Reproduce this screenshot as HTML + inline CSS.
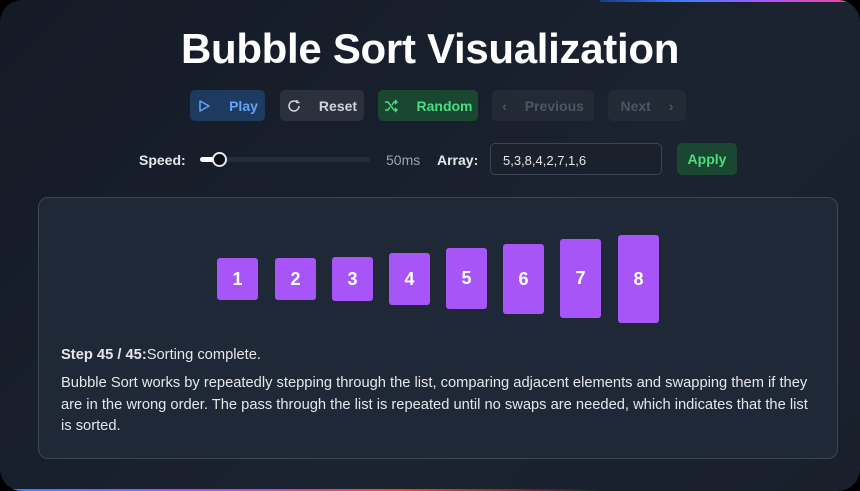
<!DOCTYPE html>
<html><head><meta charset="utf-8"><style>
*{box-sizing:border-box;margin:0;padding:0}
body{width:860px;height:491px;background:#000;font-family:"Liberation Sans",sans-serif;position:relative;overflow:hidden}
.card{position:absolute;left:0;top:0;width:860px;height:491px;border-radius:22px;background:linear-gradient(135deg,#141a26,#1b2230 60%,#19202c);overflow:hidden}
.topline{position:absolute;top:0;left:600px;right:10px;height:2px;background:linear-gradient(90deg,#1e3a8a,#3b82f6,#a855f7,#ec4899)}
.botline{position:absolute;bottom:0;left:0;width:600px;height:2px;background:linear-gradient(90deg,#3b82f6,#a855f7,#ef4444,transparent)}
h1{position:absolute;top:25px;width:100%;text-align:center;color:#fff;font-size:42px;font-weight:bold;letter-spacing:-0.3px}
.btn{position:absolute;top:90px;height:31px;border-radius:5px;font-size:14px;font-weight:bold;display:flex;align-items:center;justify-content:center;gap:18px}
.lbl{position:absolute;font-size:14px;font-weight:bold;color:#e5e7eb}
.panel{position:absolute;left:38px;top:197px;width:800px;height:262px;border:1px solid #3a4556;border-radius:10px;background:#1f2836}
.bar{position:absolute;width:41px;background:#a855f7;border-radius:3px;color:#fff;font-weight:bold;font-size:18px;display:flex;align-items:center;justify-content:center}
.txt{position:absolute;left:22px;color:#e5e7eb;font-size:14.7px;line-height:21.5px}
</style></head><body>
<div class="card">
<div class="topline"></div><div class="botline"></div>
<h1>Bubble Sort Visualization</h1>
<div class="btn" style="left:190px;width:75px;background:#1e3a5f;color:#60a5fa"><svg width="14" height="14" viewBox="0 0 14 14"><path d="M3 2 L12 7 L3 12 Z" fill="none" stroke="#60a5fa" stroke-width="1.5" stroke-linejoin="round"/></svg><span>Play</span></div>
<div class="btn" style="left:280px;width:84px;background:#2a313d;color:#d1d5db"><svg width="14" height="14" viewBox="0 0 14 14"><path d="M12 7 A5 5 0 1 1 10 3" fill="none" stroke="#d1d5db" stroke-width="1.5"/><path d="M10 1 L10 3.5 L12.5 3.5" fill="none" stroke="#d1d5db" stroke-width="1.5"/></svg><span>Reset</span></div>
<div class="btn" style="left:378px;width:100px;background:#1a4731;color:#4ade80"><svg width="15" height="14" viewBox="0 0 15 14"><path d="M1 3 H4 L10 11 H13 M1 11 H4 L6 8 M8 6 L10 3 H13 M11 1 L13 3 L11 5 M11 9 L13 11 L11 13" fill="none" stroke="#4ade80" stroke-width="1.4"/></svg><span>Random</span></div>
<div class="btn" style="left:492px;width:102px;background:#232a36;color:#4b5563"><span>‹</span><span>Previous</span></div>
<div class="btn" style="left:608px;width:78px;background:#232a36;color:#4b5563"><span>Next</span><span>›</span></div>
<div class="lbl" style="left:139px;top:152px">Speed:</div>
<div style="position:absolute;left:200px;top:157px;width:170px;height:5px;border-radius:3px;background:#252d3b"></div>
<div style="position:absolute;left:200px;top:157px;width:20px;height:5px;border-radius:3px;background:#fff"></div>
<div style="position:absolute;left:212px;top:152px;width:15px;height:15px;border-radius:50%;background:#0b0f17;border:2px solid #e5e7eb"></div>
<div style="position:absolute;left:386px;top:152px;font-size:14px;color:#9ca3af">50ms</div>
<div class="lbl" style="left:437px;top:152px">Array:</div>
<div style="position:absolute;left:490px;top:143px;width:172px;height:32px;border:1px solid #3a4556;border-radius:5px;background:#1a212d;color:#e5e7eb;font-size:13px;padding:9px 12px">5,3,8,4,2,7,1,6</div>
<div class="btn" style="left:677px;top:143px;width:60px;height:32px;background:#1a4731;color:#4ade80;font-size:14px">Apply</div>
<div class="panel">
<div class="bar" style="left:178px;top:60px;height:42px">1</div>
<div class="bar" style="left:236px;top:60px;height:42px">2</div>
<div class="bar" style="left:293px;top:59px;height:44px">3</div>
<div class="bar" style="left:350px;top:55px;height:52px">4</div>
<div class="bar" style="left:407px;top:50px;height:61px">5</div>
<div class="bar" style="left:464px;top:46px;height:70px">6</div>
<div class="bar" style="left:521px;top:41px;height:79px">7</div>
<div class="bar" style="left:579px;top:37px;height:88px">8</div>
<div class="txt" style="top:147px"><b>Step 45 / 45:</b>Sorting complete.</div>
<div class="txt" style="top:175px;width:760px">Bubble Sort works by repeatedly stepping through the list, comparing adjacent elements and swapping them if they are in the wrong order. The pass through the list is repeated until no swaps are needed, which indicates that the list is sorted.</div>
</div>
</div>
</body></html>
